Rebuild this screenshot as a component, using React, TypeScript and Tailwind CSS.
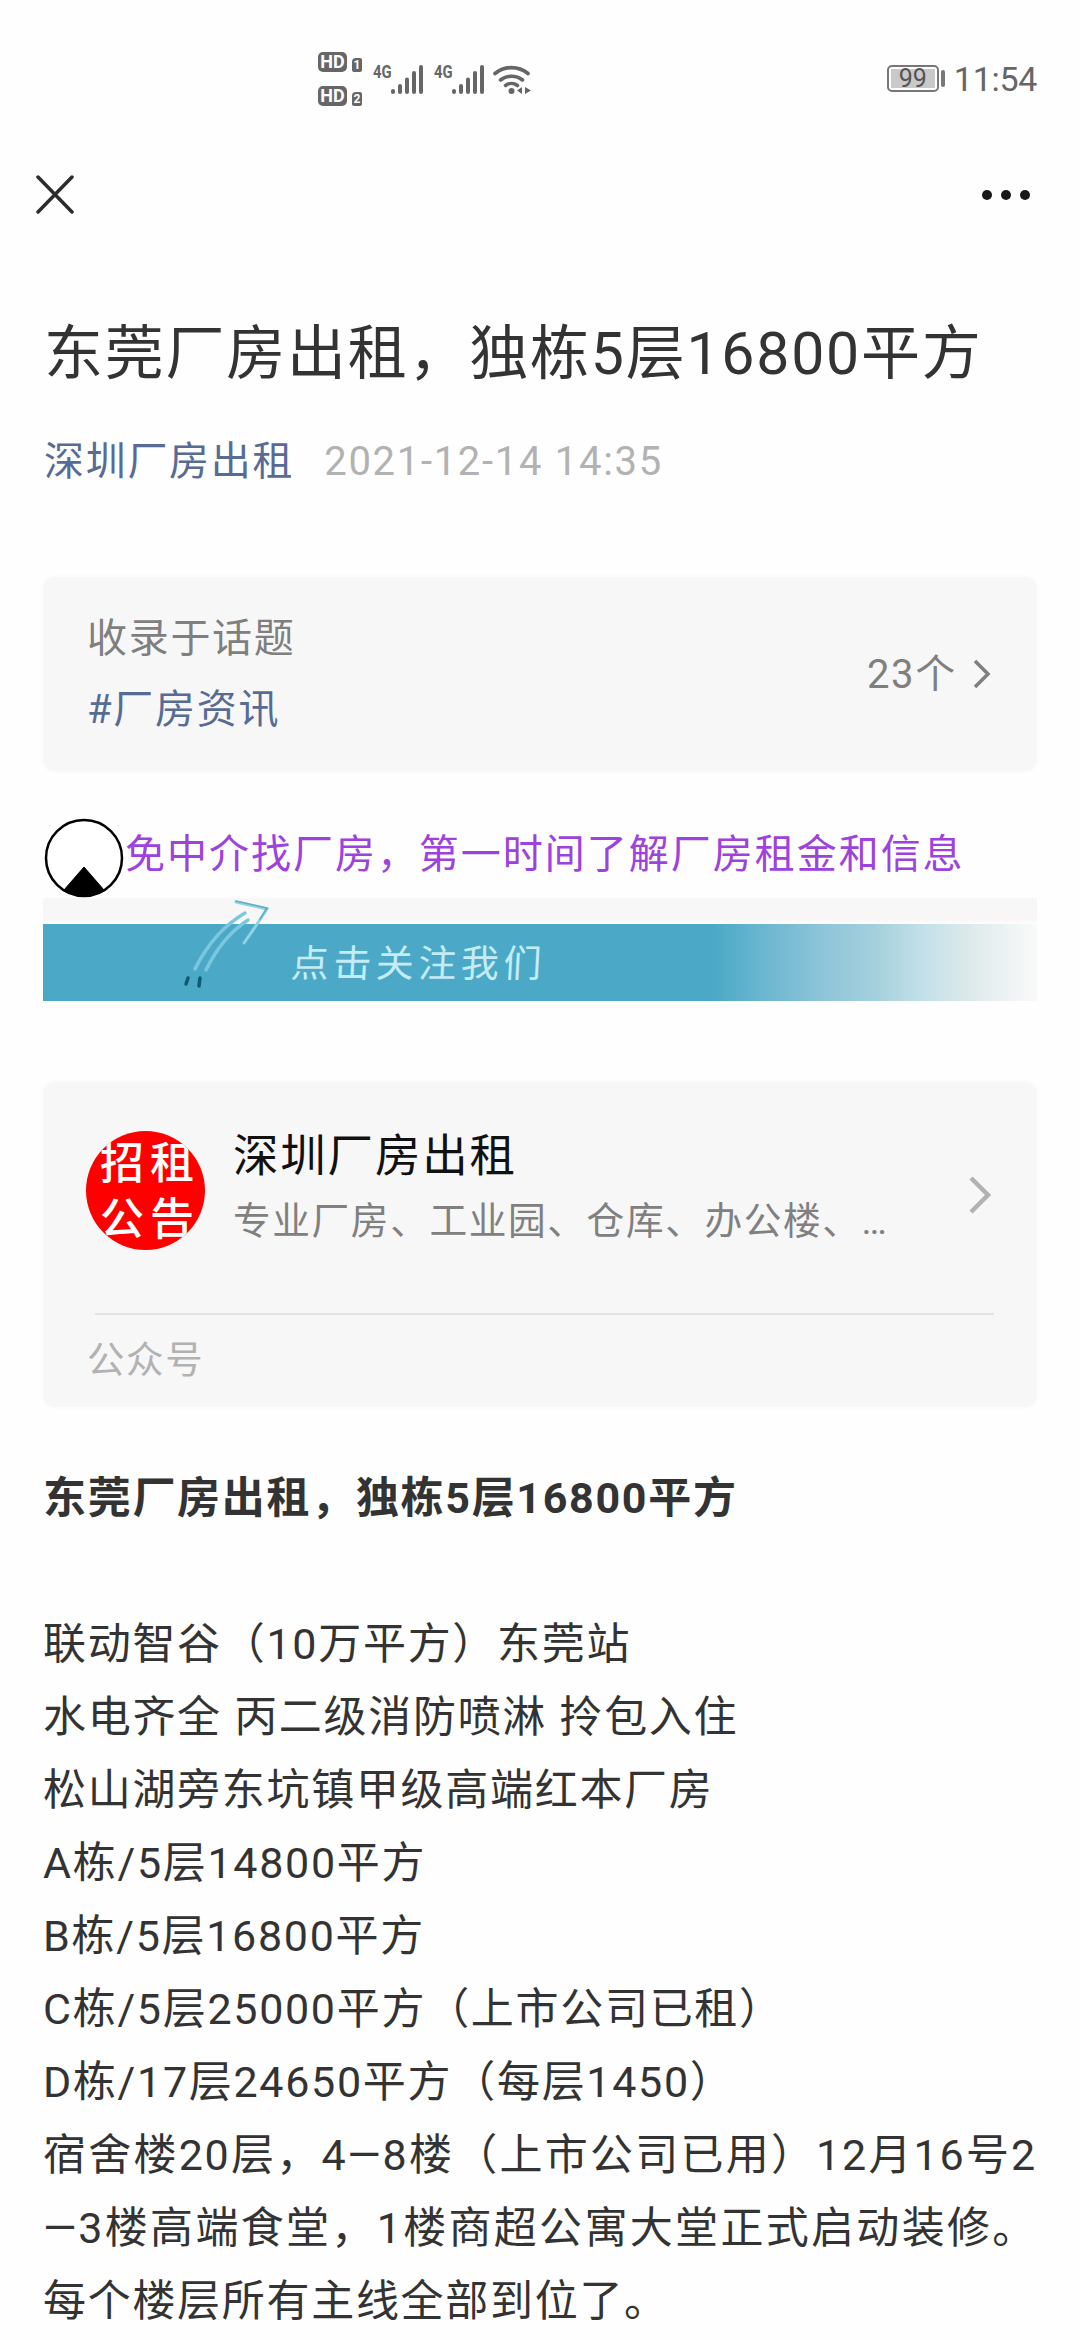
import type { ReactNode } from "react";

const paragraphs = [
  "联动智谷（10万平方）东莞站",
  "水电齐全 丙二级消防喷淋 拎包入住",
  "松山湖旁东坑镇甲级高端红本厂房",
  "A栋/5层14800平方",
  "B栋/5层16800平方",
  "C栋/5层25000平方（上市公司已租）",
  "D栋/17层24650平方（每层1450）",
  "宿舍楼20层，4—8楼（上市公司已用）12月16号2—3楼高端食堂，1楼商超公寓大堂正式启动装修。每个楼层所有主线全部到位了。",
];

function HdBadge({ sim }: { sim: string }) {
  return (
    <div className="flex items-end gap-[5px]">
      <div className="flex h-5 w-[29px] items-center justify-center rounded-[5px] bg-[#666] text-[18px] leading-none font-bold text-white">
        HD
      </div>
      <div className="flex h-[14px] w-[10px] items-center justify-center rounded-[2px] rounded-tl-[4px] bg-[#666] text-[12px] leading-none font-bold text-white">
        {sim}
      </div>
    </div>
  );
}

function Signal() {
  return (
    <div className="flex h-8 w-[50px]">
      <span className="-mt-px h-4 w-[18px] origin-left scale-x-[0.78] text-[19px] leading-none font-bold text-[#666]">
        4G
      </span>
      <svg width="32" height="32" viewBox="0 0 32 32" stroke="#666" strokeWidth="4" strokeLinecap="round">
        <path d="M2 29v-1M9 29v-6M16 29V16.500M23 29V10M30 29V4" />
      </svg>
    </div>
  );
}

function StatusBar() {
  return (
    <div className="flex h-[157px] items-center justify-between pr-[43px] pl-[318px]">
      <div className="flex items-center">
        <div className="flex flex-col gap-[14px]">
          <HdBadge sim="1" />
          <HdBadge sim="2" />
        </div>
        <div className="ml-[11px] flex gap-[11px]">
          <Signal />
          <Signal />
        </div>
        <svg className="ml-[9px]" width="38" height="32" viewBox="0 0 38 32" fill="none" stroke="#666" strokeWidth="3.600" strokeLinecap="round">
          <path d="M2 10.500a26 26 0 0 1 33 0M7.500 17a18 18 0 0 1 22 0M12.500 22.500a10 10 0 0 1 12 0" />
          <circle cx="18.500" cy="28" r="3" fill="#666" stroke="none" />
          <path d="M29 24v7l-5-3.500zM32 24v7l6-3.500z" fill="#666" stroke="none" />
        </svg>
      </div>
      <div className="flex items-center">
        <div className="h-[27px] w-[52px] rounded-[5px] border-2 border-[#777] p-[2px]">
          <div className="flex h-full items-center justify-center bg-[#c9c9c9] text-[25px] leading-none text-[#555]">
            99
          </div>
        </div>
        <div className="ml-[2px] h-[17px] w-1 rounded-full bg-[#777]" />
        <span className="ml-[9px] text-[34px] leading-none tracking-[-0.3px] text-[#666]">11:54</span>
      </div>
    </div>
  );
}

function Card({ className, children }: { className: string; children: ReactNode }) {
  return (
    <div className={`mx-px rounded-[10px] bg-[#f7f7f7] shadow-[0_0_5px_#f7f7f7] ${className}`}>
      {children}
    </div>
  );
}

function Banner() {
  return (
    <div className="relative h-[103px] bg-[linear-gradient(#f7f7f7,#f9f6f6_22px,#fefefe_26px)] pt-[26px]">
      <div className="flex h-[77px] items-center bg-[linear-gradient(90deg,#4ba9c7_0,#4ba9c7_670px,#6fb8d0_727px,#8fc5d8_782px,#a6d1dd_837px,#c3e0e9_880px,#dce9ea_925px,#eef3f5_965px,#f9f9f9_994px)] pt-[4px] pl-[248px] text-[38px] tracking-[4.500px] text-[#c4ecf5]">
        <span className="-skew-x-3">点击关注我们</span>
      </div>
      <svg className="absolute top-0 left-[133px]" width="110" height="100" viewBox="0 0 110 100" fill="none" strokeLinecap="round">
        <path d="M60 4l31 7q-9 14-23 34" stroke="#8fd3e6" strokeWidth="3" />
        <path d="M69 15Q38 33 19 71M72 22Q46 39 30 72" stroke="#79c8e0" strokeWidth="3.500" />
        <path d="M60 3l31 7l-7 11" stroke="#5fadc2" strokeWidth="1.500" />
        <path d="M12 80l-2 6M24 80l-1 8" stroke="#0f5a74" strokeWidth="3.500" />
      </svg>
    </div>
  );
}

export default function App() {
  return (
    <div className="h-[2340px] w-[1080px] overflow-hidden bg-[#fefefe] font-[Roboto,'Noto_Sans_CJK_SC',sans-serif] whitespace-nowrap text-[#333]">
      <StatusBar />
      <div className="flex h-[75px] items-center justify-between pr-[50px] pl-[35px]">
        <svg width="40" height="40" viewBox="0 0 40 40" stroke="#2c2c2c" strokeWidth="3.500" strokeLinecap="round">
          <path d="M3 2l34 35M37 2L3 37" />
        </svg>
        <div className="flex gap-[9px]">
          <i className="size-[10px] rounded-full bg-[#181818]" />
          <i className="size-[10px] rounded-full bg-[#181818]" />
          <i className="size-[10px] rounded-full bg-[#181818]" />
        </div>
      </div>

      <div className="px-[43px]">
        <h1 className="mt-[80px] ml-px h-[84px] text-[59px] leading-[84px] tracking-[1.750px]">
          东莞厂房出租，独栋5层16800平方
        </h1>
        <div className="mt-[36px] ml-px flex h-[60px] gap-[30px] text-[40px] leading-[60px] tracking-[1.700px]">
          <span className="text-[#576b95]">深圳厂房出租</span>
          <span className="text-[#b2b2b2]">2021-12-14 14:35</span>
        </div>

        <Card className="mt-[85px] flex h-[194px] items-center justify-between pr-[45px] pl-[43px] text-[40px] leading-[71px] tracking-[1.700px]">
          <div>
            <div className="text-[#7f7f7f]">收录于话题</div>
            <div className="text-[#576b95]">#厂房资讯</div>
          </div>
          <div className="flex items-center gap-[16px] text-[#7f7f7f]">
            23个
            <svg width="18" height="30" viewBox="0 0 18 30" fill="none" stroke="#7f7f7f" strokeWidth="3.500">
              <path d="M2 2l13 13L2 28" />
            </svg>
          </div>
        </Card>

        <div className="mt-[47px] flex h-[80px] items-center gap-[1px]">
          <svg className="ml-px" width="80" height="80" viewBox="0 0 80 80">
            <circle cx="40" cy="40" r="38" fill="#fff" stroke="#000" strokeWidth="2.500" />
            <path d="M40 49l20 23a38 38 0 0 1-40 0z" fill="#000" stroke="#000" />
          </svg>
          <span className="pb-[6px] text-[40px] leading-[60px] tracking-[1.980px] text-[#9d42dc]">
            免中介找厂房，第一时间了解厂房租金和信息
          </span>
        </div>
        <Banner />

        <Card className="mt-[81px] h-[325px] px-[42px] pt-[49px]">
          <div className="flex h-[119px] items-center">
            <div className="grid size-[119px] grid-cols-[50px_50px] content-center justify-center overflow-hidden rounded-full bg-[#fe0000] pt-[3px] pl-[3px] text-center text-[44px] leading-[56px] font-medium text-white">
              <span>招</span>
              <span>租</span>
              <span>公</span>
              <span>告</span>
            </div>
            <div className="ml-[28px] flex-1 pb-[3px]">
              <div className="text-[45.500px] leading-[64px] tracking-[1.800px] text-[#111]">
                深圳厂房出租
              </div>
              <div className="text-[37.700px] leading-[64px] tracking-[1.600px] text-[#808080]">
                专业厂房、工业园、仓库、办公楼、…
              </div>
            </div>
            <svg className="mt-2 mr-[2px]" width="24" height="38" viewBox="0 0 24 38" fill="none" stroke="#b2b2b2" strokeWidth="4.500">
              <path d="M3 2l17 17L3 36" />
            </svg>
          </div>
          <div className="mt-[63px] ml-[9px] h-[2px] bg-[#e2e2e2]" />
          <div className="mt-[15px] pl-px text-[37.500px] leading-[60px] tracking-[1.600px] text-[#b2b2b2]">
            公众号
          </div>
        </Card>

        <article className="mt-[55px] text-justify text-[43px] leading-[73px] tracking-[1.700px] whitespace-normal">
          <strong className="block">东莞厂房出租，独栋5层16800平方</strong>
          <br />
          {paragraphs.map((text) => (
            <p key={text}>{text}</p>
          ))}
        </article>
      </div>
    </div>
  );
}
